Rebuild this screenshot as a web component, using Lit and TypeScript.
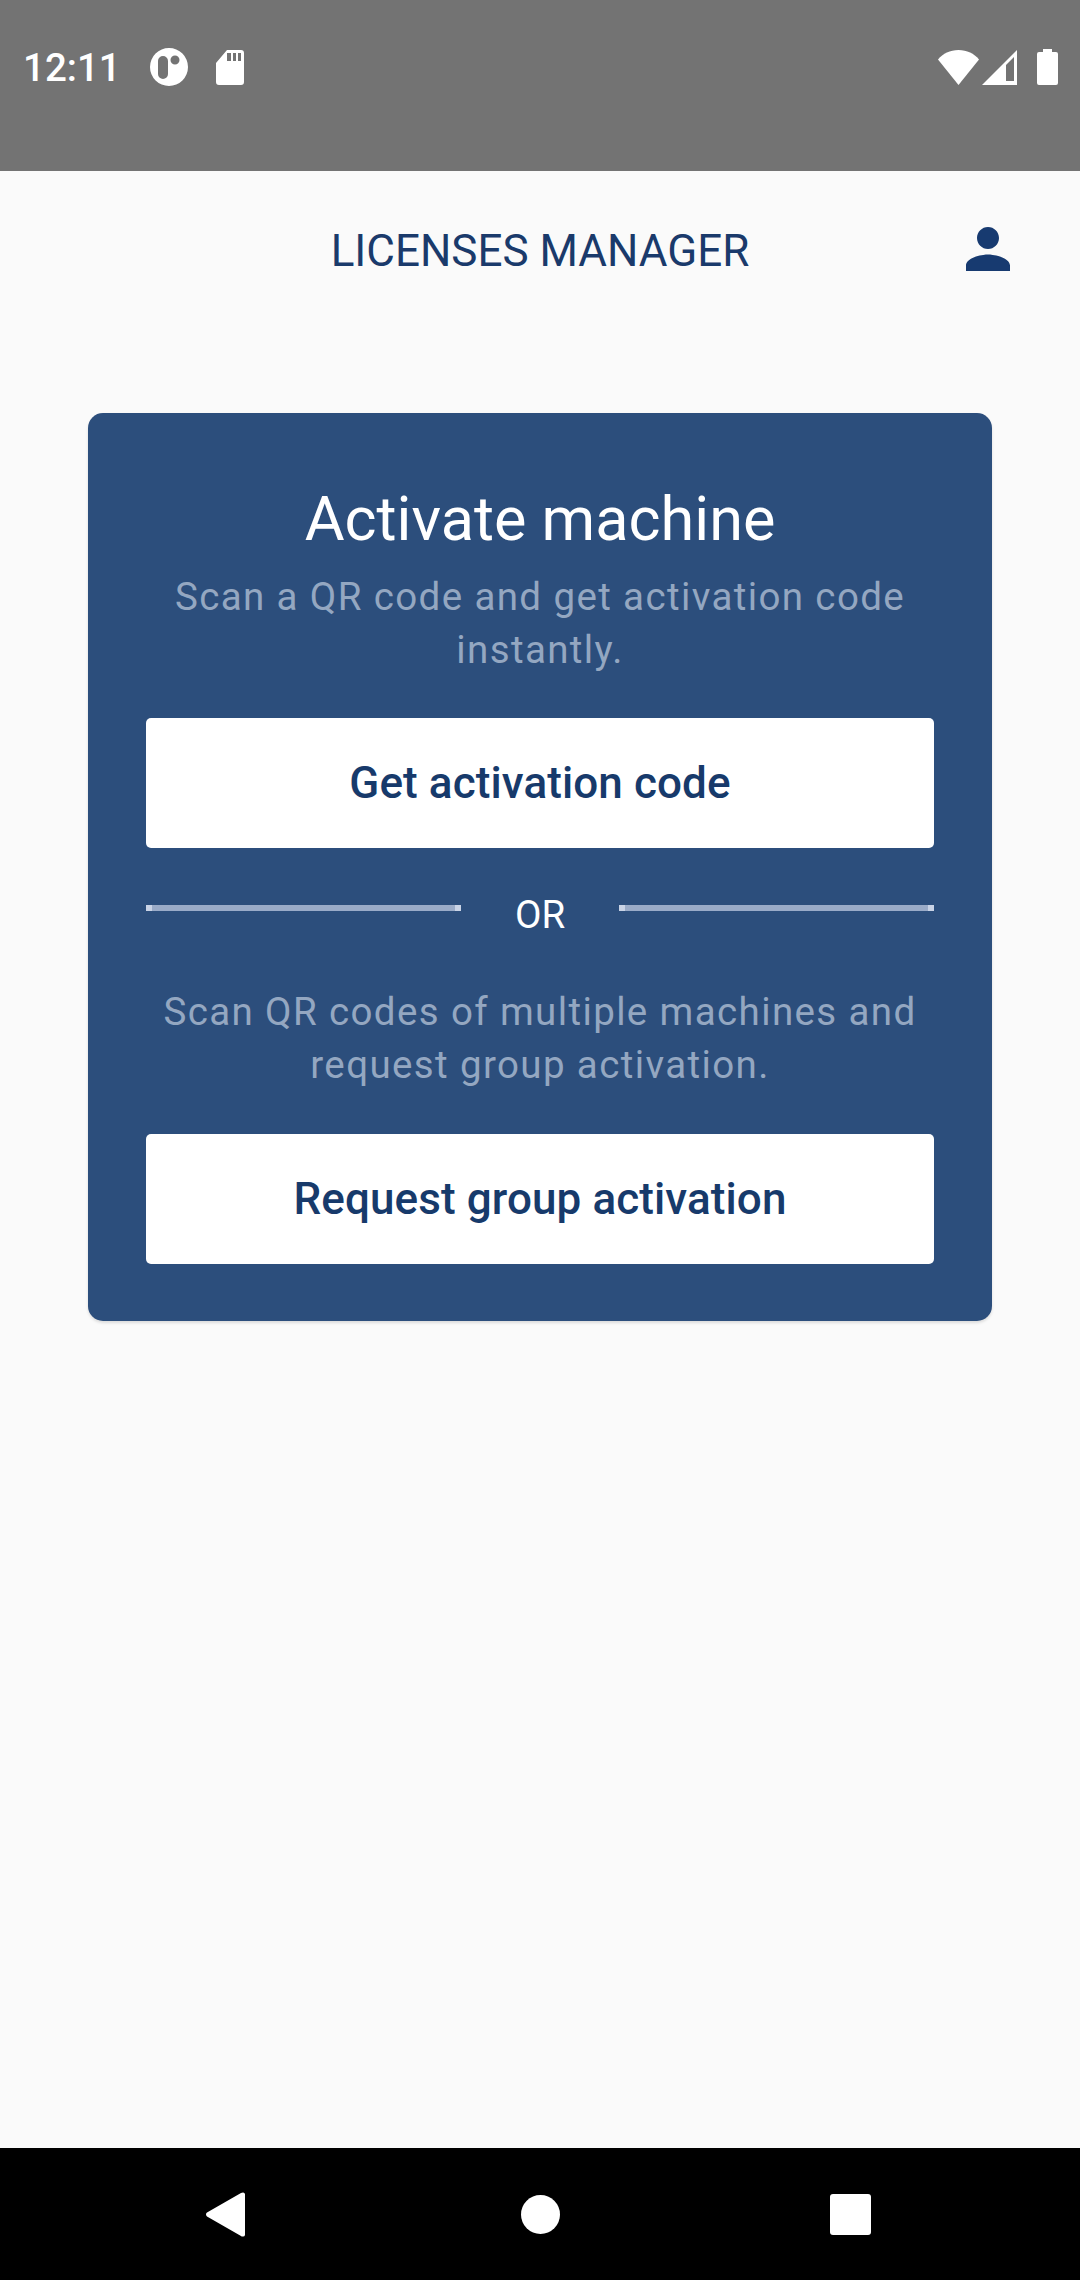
import { LitElement, html, css } from 'lit';
import { customElement } from 'lit/decorators.js';

@customElement('app-root')
export class AppRoot extends LitElement {
  static styles = css`
    :host {
      display: flex;
      flex-direction: column;
      height: 2280px;
      background: #fafafa;
      font-family: Roboto, sans-serif;
    }
    .status {
      height: 171px;
      background: #737373;
      display: flex;
      align-items: flex-start;
      padding: 48px 22px 0 23px;
      box-sizing: border-box;
      color: #fff;
      flex: none;
    }
    .time {
      font-size: 38.500px;
      font-weight: 500;
      line-height: 40px;
      width: 127px;
    }
    .status svg { display: block; fill: #fff; }
    .sd { margin-left: 28px; margin-top: 2px; }
    .spacer { flex: 1; }
    .signal { margin-left: 3px; margin-top: 2px; }
    .wifi { margin-top: 2px; }
    .battery { margin-left: 20px; margin-top: 1px; }
    .header {
      height: 158px;
      flex: none;
      display: flex;
      align-items: center;
      justify-content: center;
      position: relative;
      color: #1a3a6b;
      font-size: 44px;
      padding-top: 2px;
      box-sizing: border-box;
    }
    .person {
      position: absolute;
      left: 955px;
      top: 45px;
      fill: #173a70;
    }
    .main {
      flex: 1;
      padding: 84px 88px 0;
    }
    .card {
      background: #2c4e7c;
      border-radius: 15px;
      box-shadow: 0 2px 3px rgba(0, 0, 0, 0.12);
      padding: 70px 58px 57px;
      display: flex;
      flex-direction: column;
      text-align: center;
      width: 904px;
      box-sizing: border-box;
    }
    h1 {
      margin: 0;
      font-weight: 400;
      font-size: 61.200px;
      line-height: 72px;
      color: #fff;
    }
    p {
      margin: 0;
      font-size: 38.500px;
      line-height: 52.500px;
      letter-spacing: 1.380px;
      color: #94a7c1;
    }
    .first { margin-top: 16px; }
    .btn {
      height: 130px;
      flex: none;
      background: #fff;
      border-radius: 5px;
      display: flex;
      align-items: center;
      justify-content: center;
      font-weight: 500;
      font-size: 44px;
      color: #173a6b;
      letter-spacing: 0.100px;
    }
    .btn-a { margin-top: 42px; }
    .or {
      display: flex;
      align-items: flex-start;
      margin-top: 57px;
      height: 60px;
    }
    .line {
      flex: 1;
      height: 6px;
      background: linear-gradient(to right, #c9d3e6 6px, #9aabc8 6px, #9aabc8 calc(100% - 6px), #c9d3e6 calc(100% - 6px));
    }
    .or span {
      width: 158px;
      color: #fff;
      font-size: 38.500px;
      line-height: 20px;
      margin-top: 0;
    }
    .second { margin-top: 21px; }
    .btn-b { margin-top: 43px; }
    .nav {
      height: 132px;
      flex: none;
      background: #000;
      display: flex;
      align-items: flex-start;
      justify-content: space-between;
      padding: 44px 209px 0 206px;
      box-sizing: border-box;
    }
    .nav svg { display: block; fill: #fff; }
    .home { margin-top: 3px; margin-left: 6px; }
    .recent { margin-top: 2px; }
  `;

  render() {
    return html`
      <div class="status">
        <span class="time">12:11</span>
        <svg width="38" height="38" viewBox="0 0 38 38">
          <path fill-rule="evenodd" d="M19 0a19 19 0 1 1 0 38a19 19 0 1 1 0-38ZM13 8a5 5 0 0 0-5 5v13a5 5 0 0 0 10 0v-13a5 5 0 0 0-5-5ZM25 7.500a4.500 4.500 0 1 0 0 9a4.500 4.500 0 1 0 0-9Z" />
        </svg>
        <svg class="sd" width="28" height="35" viewBox="0 0 28 35">
          <path fill-rule="evenodd" d="M11 0H25a3 3 0 0 1 3 3V32a3 3 0 0 1-3 3H3a3 3 0 0 1-3-3V13ZM11 3v8h4V3ZM17 3v8h3V3ZM22 3v8h3V3Z" />
        </svg>
        <span class="spacer"></span>
        <svg class="wifi" width="41" height="35" viewBox="0 0 41 35">
          <path d="M0 9.500C5 3.500 12 0 20.500 0S36 3.500 41 9.500L20.500 35Z" />
        </svg>
        <svg class="signal" width="35" height="35" viewBox="0 0 35 35">
          <path fill-rule="evenodd" d="M35 0V35H0ZM24 15V31H32V7Z" />
        </svg>
        <svg class="battery" width="21" height="36" viewBox="0 0 21 36">
          <path d="M6 0H15V3H19a2 2 0 0 1 2 2V34a2 2 0 0 1-2 2H2a2 2 0 0 1-2-2V5a2 2 0 0 1 2-2H6Z" />
        </svg>
      </div>
      <div class="header">
        LICENSES MANAGER
        <svg class="person" width="66" height="66" viewBox="0 0 24 24">
          <path d="M12 12c2.210 0 4-1.790 4-4s-1.790-4-4-4-4 1.790-4 4 1.790 4 4 4zm0 2c-2.670 0-8 1.340-8 4v2h16v-2c0-2.660-5.330-4-8-4z" />
        </svg>
      </div>
      <div class="main">
        <div class="card">
          <h1>Activate machine</h1>
          <p class="first">Scan a QR code and get activation code instantly.</p>
          <div class="btn btn-a">Get activation code</div>
          <div class="or">
            <div class="line"></div>
            <span>OR</span>
            <div class="line"></div>
          </div>
          <p class="second">Scan QR codes of multiple machines and request group activation.</p>
          <div class="btn btn-b">Request group activation</div>
        </div>
      </div>
      <div class="nav">
        <svg width="39" height="45" viewBox="0 0 39 45">
          <path d="M37 0.500a2 2 0 0 1 2 1.500V43a2 2 0 0 1-2 1.500a2 2 0 0 1-2-.500L1 24.500a2.500 2.500 0 0 1 0-4L35 1Z" />
        </svg>
        <svg class="home" width="39" height="39" viewBox="0 0 39 39"><circle cx="19.500" cy="19.500" r="19.500" /></svg>
        <svg class="recent" width="41" height="41" viewBox="0 0 41 41"><rect width="41" height="41" rx="3" /></svg>
      </div>
    `;
  }
}
